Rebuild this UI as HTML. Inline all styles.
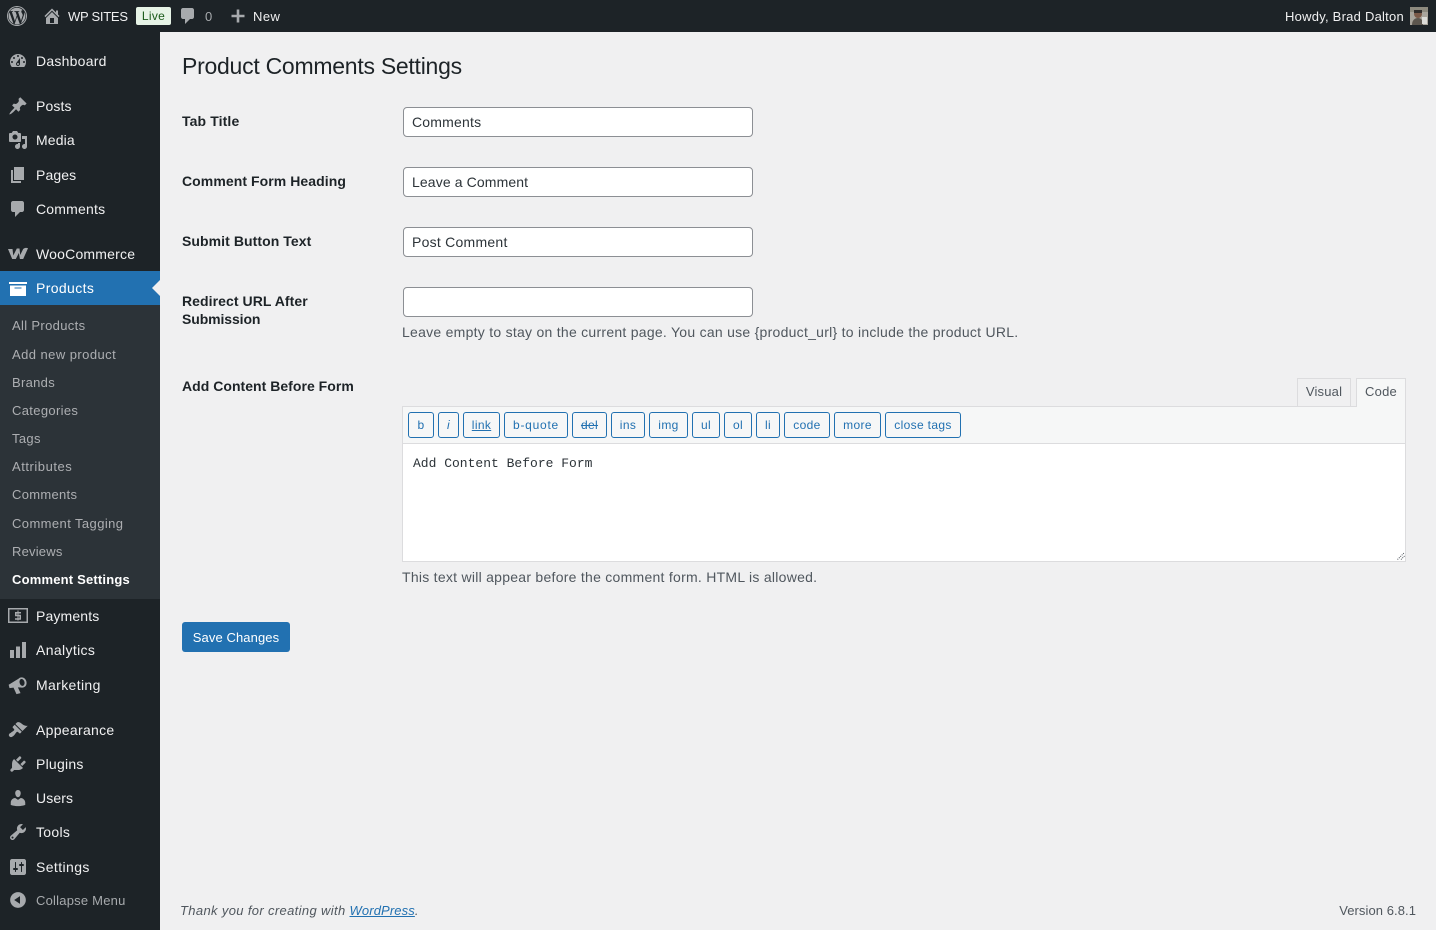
<!DOCTYPE html>
<html lang="en"><head><meta charset="utf-8"><title>Product Comments Settings</title>
<style>
html,body{margin:0;padding:0;width:1436px;height:930px;overflow:hidden;background:#f0f0f1}
body{position:relative;font-family:"Liberation Sans",Arial,sans-serif;font-size:14px;color:#1d2327}
.a,.t,.m,.s,.l,.q{position:absolute}
.t,.m,.s,.l{white-space:nowrap;line-height:20px;margin-top:-10px}
.m{left:36px;color:#f0f0f1;font-size:14px;letter-spacing:.24px}
.s{left:12px;color:#c3c4c7;font-size:13px;letter-spacing:.4px;opacity:.85}
.l{left:182px;font-weight:bold;letter-spacing:.07px;color:#1d2327}
svg.i{position:absolute;fill:#a7aaad}
.in{position:absolute;left:403px;width:350px;height:30px;box-sizing:border-box;border:1px solid #8c8f94;border-radius:4px;background:#fff;padding-left:8px;line-height:28px;color:#2c3338;letter-spacing:.2px}
.q{top:412px;height:26px;box-sizing:border-box;border:1px solid #2271b1;border-radius:3px;background:#f6f7f7;color:#2271b1;font-size:12px;line-height:24px;text-align:center;letter-spacing:.35px}
.d{color:#50575e;letter-spacing:.265px}
</style></head><body>
<div class="a" style="left:0;top:0;width:1436px;height:32px;background:#1d2327"></div>
<div class="a" style="left:0;top:32px;width:160px;height:898px;background:#1d2327"></div>
<div class="a" style="left:0;top:271px;width:160px;height:34px;background:#2271b1"></div>
<div class="a" style="left:0;top:305px;width:160px;height:294px;background:#2c3338"></div>
<div class="a" style="left:152px;top:280px;width:0;height:0;border:8px solid transparent;border-left:0;border-right-color:#f0f0f1"></div>

<!-- admin bar -->
<svg class="i" style="left:7px;top:6px" width="20" height="20" viewBox="0 0 20 20"><path fill-rule="evenodd" d="M10 0a10 10 0 1 1 0 20a10 10 0 0 1 0-20zm0 1a9 9 0 1 0 0 18a9 9 0 0 0 0-18zM2.400 6.300L6.500 17.600A8.400 8.400 0 0 1 2.400 6.300zM15.800 9.700c0-1-.4-1.700-.7-2.300-.4-.7-.8-1.200-.8-1.900 0-.7.5-1.400 1.300-1.400h.1A8.400 8.400 0 0 0 3.100 5.100h.5c.9 0 2.200-.1 2.200-.1.400 0 .5.6 0 .7 0 0-.5.1-1 .1l3.100 9.200 1.900-5.600-1.300-3.600c-.5 0-.9-.1-.9-.1-.5 0-.4-.7 0-.7 0 0 1.400.1 2.200.1.900 0 2.200-.1 2.200-.1.400 0 .5.6 0 .7 0 0-.5.1-1 .1l3 9.100.8-2.800c.4-1.100.7-1.900.7-2.600zM10.100 10.700l-2.500 7.400a8.400 8.400 0 0 0 5.200-.1zM17.300 5.900c.1.300.1.600.1.900 0 .900-.2 1.900-.7 3.100l-2.600 7.400a8.400 8.400 0 0 0 3.200-11.400z"/></svg>
<svg class="i" style="left:43px;top:6px" width="18" height="20" viewBox="1 1 18 18"><path d="M16 8.500l1.530 1.530-1.060 1.060L10 4.620l-6.470 6.470-1.060-1.060L10 2.500l4 4v-2h2v4zm-6-2.460l6 5.990V18H4v-5.970zM12 17v-5H8v5h4z"/></svg>
<div class="t" style="left:68px;top:17px;color:#f0f0f1;font-size:13px;letter-spacing:-.27px">WP SITES</div>
<div class="a" style="left:136px;top:7px;width:35px;height:18px;background:#e6f3e6;border-radius:2px;color:#1a5a1a;font-size:12px;line-height:19px;text-align:center;letter-spacing:.3px">Live</div>
<svg class="i" style="left:179px;top:6px" width="18" height="20" viewBox="1 1 18 18"><path d="M5 2h9c1.100 0 2 .9 2 2v7c0 1.100-.9 2-2 2h-2l-5 5v-5H5c-1.100 0-2-.9-2-2V4c0-1.100.9-2 2-2z"/></svg>
<div class="t" style="left:205px;top:17px;color:#a7aaad;font-size:13px">0</div>
<svg class="i" style="left:230px;top:8px" width="16" height="16" viewBox="0 0 16 16"><path d="M6.700 1.500h2.600v5.200h5.200v2.600H9.300v5.200H6.700V9.300H1.500V6.700h5.200z"/></svg>
<div class="t" style="left:253px;top:17px;color:#f0f0f1;font-size:13px;letter-spacing:.45px">New</div>
<div class="t" style="left:1285px;top:17px;color:#f0f0f1;font-size:13px;letter-spacing:.24px">Howdy, Brad Dalton</div>
<svg class="a" style="left:1410px;top:7px" width="18" height="18" viewBox="0 0 18 18"><rect width="18" height="18" fill="#a9a59c"/><rect x="0" y="0" width="18" height="5" fill="#8d8a7e"/><circle cx="8" cy="7" r="4" fill="#7c5a48"/><rect x="4" y="3" width="8" height="3" fill="#2f2c2a"/><path d="M2 18c0-5 3-7 6-7s5 2 5 7z" fill="#5c564e"/><rect x="12" y="10" width="5" height="7" fill="#dcdcd8"/></svg>

<!-- menu icons -->
<svg class="i" style="left:8px;top:51px" width="20" height="20" viewBox="0 0 20 20"><path d="M3.760 16h12.480c1.100-1.370 1.760-3.110 1.760-5 0-4.420-3.580-8-8-8s-8 3.580-8 8c0 1.890.66 3.630 1.760 5zM10 4c.55 0 1 .45 1 1s-.45 1-1 1-1-.45-1-1 .45-1 1-1zM6 6c.55 0 1 .45 1 1s-.45 1-1 1-1-.45-1-1 .45-1 1-1zm8 0c.55 0 1 .45 1 1s-.45 1-1 1-1-.45-1-1 .45-1 1-1zm-5.370 5.550L12 7v6c0 1.100-.9 2-2 2s-2-.9-2-2c0-.57.24-1.080.63-1.450zM4 10c.55 0 1 .45 1 1s-.45 1-1 1-1-.45-1-1 .45-1 1-1zm12 0c.55 0 1 .45 1 1s-.45 1-1 1-1-.45-1-1 .45-1 1-1zm-5 3c0-.55-.45-1-1-1s-1 .45-1 1 .45 1 1 1 1-.45 1-1z"/></svg>
<svg class="i" style="left:8px;top:96px" width="20" height="20" viewBox="0 0 20 20"><path d="M10.440 3.020l1.820-1.820 6.360 6.350-1.830 1.820c-1.050-.68-2.480-.57-3.410.36l-.75.75c-.92.93-1.040 2.350-.35 3.410l-1.830 1.820-2.410-2.410-2.800 2.790c-.42.42-3.380 2.710-3.800 2.290s1.860-3.390 2.280-3.810l2.790-2.790L4.100 9.360l1.830-1.820c1.050.69 2.480.57 3.400-.36l.75-.75c.93-.92 1.050-2.350.36-3.410z"/></svg>
<svg class="i" style="left:8px;top:130px" width="20" height="20" viewBox="0 0 20 20"><path d="M13 11V4c0-.55-.45-1-1-1h-1.670L9 1H5L3.670 3H2c-.55 0-1 .45-1 1v7c0 .55.45 1 1 1h10c.55 0 1-.45 1-1zM7 4.500c1.380 0 2.500 1.120 2.500 2.500S8.380 9.500 7 9.500 4.500 8.380 4.500 7 5.620 4.500 7 4.500zM14 6h5v10.500c0 1.380-1.120 2.500-2.500 2.500S14 17.880 14 16.500s1.120-2.500 2.500-2.500c.17 0 .34.020.5.050V9h-3V6zm-4 8.050V13h2v3.500c0 1.380-1.120 2.500-2.500 2.500S7 17.880 7 16.500 8.120 14 9.500 14c.17 0 .34.020.5.050z"/></svg>
<svg class="i" style="left:8px;top:165px" width="20" height="20" viewBox="0 0 20 20"><path d="M6 15V2h10v13H6zm-1 1h8v2H3V5h2v11z"/></svg>
<svg class="i" style="left:8px;top:199px" width="20" height="20" viewBox="0 0 20 20"><path d="M5 2h9c1.100 0 2 .9 2 2v7c0 1.100-.9 2-2 2h-2l-5 5v-5H5c-1.100 0-2-.9-2-2V4c0-1.100.9-2 2-2z"/></svg>
<svg class="i" style="left:8px;top:247px" width="20" height="13" viewBox="0 0 20 13"><path d="M0 2h4.500l.8 6.500L8.800 1.500h2.700l.7 6.500L15.200 2c1.400-1.300 3.800-1.300 4.800-.8L15.200 12h-3.300l-1-6L7.800 12H4.200z"/></svg>
<svg class="a" style="left:8px;top:278px" width="20" height="20" viewBox="0 0 20 20"><path fill="#fff" d="M1 4h18v2H1zM2 7.500h16V18H2zM6.500 9.500v1h7v-1z" fill-rule="evenodd"/></svg>
<svg class="i" style="left:8px;top:607px" width="20" height="18" viewBox="0 0 20 18"><path fill-rule="evenodd" d="M0 1h20v15H0zM1.500 2.500v12h17v-12z"/><path d="M7 5h6v1.500H8.500v1.300H13v5H7v-1.500h4.500v-2H7zM9.500 3.500h1v10h-1z"/></svg>
<svg class="i" style="left:8px;top:640px" width="20" height="20" viewBox="0 0 20 20"><path d="M2 10h4v8H2zM8 6.500h4V18H8zM14 2h4v16h-4z"/></svg>
<svg class="i" style="left:8px;top:675px" width="20" height="20" viewBox="0 0 20 20"><g transform="rotate(-14 10 10)"><path fill-rule="evenodd" d="M1 7.500L12 4c1-.5 1.500-.6 2.500-.6 3 0 4.500 2.600 4.500 5.100 0 2.800-1.700 5.200-4.500 5.200-1 0-1.500-.2-2.500-.6l-2.700-.8 1.200 6.200H6.300L5 11.500l-4-.5zM14.500 5c-1.400 0-2.400 1.700-2.400 3.500s1 3.500 2.400 3.500 2.500-1.700 2.500-3.500S15.900 5 14.500 5z"/></g></svg>
<svg class="i" style="left:8px;top:720px" width="20" height="20" viewBox="0 0 20 20"><path d="M14.480 11.060L7.410 3.990l1.500-1.500c.5-.56 2.300-.47 3.510.32 1.210.8 1.430 1.280 2.910 2.100 1.180.64 2.450 1.260 4.450.85zm-.71.71L6.700 4.700 4.930 6.470c-.39.39-.39 1.020 0 1.410l1.060 1.060c.39.39.39 1.030 0 1.420-.6.6-1.430 1.110-2.210 1.690-.35.26-.7.530-1.010.84C1.430 13.230 0 15 1.500 16.500s3.270.07 4.610-1.270c.31-.31.580-.66.840-1.010.58-.78 1.090-1.610 1.690-2.210.39-.39 1.020-.39 1.410 0l1.060 1.060c.39.39 1.020.39 1.410 0z"/></svg>
<svg class="i" style="left:8px;top:754px" width="20" height="20" viewBox="0 0 20 20"><path d="M13.110 4.360L9.870 7.600 8 5.730l3.240-3.240c.35-.34 1.050-.2 1.560.32.52.51.66 1.210.31 1.550zm-8 1.770l.91-1.120 9.010 9.010-1.190.84c-.71.71-2.630 1.160-3.820 1.160H6.140L4.900 17.260c-.59.59-1.540.59-2.120 0-.59-.58-.59-1.530 0-2.120l1.240-1.240v-3.880c0-1.130.4-3.190 1.090-3.890zm7.260 3.970l3.240-3.240c.34-.35 1.040-.21 1.550.31.52.51.66 1.210.31 1.550l-3.240 3.250z"/></svg>
<svg class="i" style="left:8px;top:788px" width="20" height="20" viewBox="0 0 20 20"><path d="M10 9.250c-2.270 0-2.730-3.440-2.730-3.440C7 4.020 7.820 2 9.970 2c2.160 0 2.980 2.020 2.710 3.810 0 0-.41 3.440-2.680 3.440zm0 2.570L12.720 10c2.390 0 4.520 2.330 4.520 4.530v2.490s-3.650 1.130-7.240 1.130c-3.650 0-7.240-1.130-7.240-1.130v-2.490c0-2.250 1.940-4.480 4.470-4.480z"/></svg>
<svg class="i" style="left:8px;top:822px" width="20" height="20" viewBox="0 0 20 20"><path d="M16.680 9.770c-1.340 1.340-3.300 1.670-4.950.99l-5.410 6.520c-.99.99-2.590.99-3.580 0s-.99-2.590 0-3.570l6.520-5.420c-.68-1.650-.35-3.610.99-4.950 1.280-1.280 3.120-1.620 4.720-1.060l-2.890 2.890 2.820 2.820 2.860-2.870c.53 1.580.18 3.390-1.080 4.650zM3.810 16.210c.4.39 1.040.39 1.430 0 .4-.4.4-1.040 0-1.430-.39-.4-1.030-.4-1.430 0-.39.39-.39 1.030 0 1.430z"/></svg>
<svg class="i" style="left:8px;top:857px" width="20" height="20" viewBox="0 0 20 20"><path d="M18 16V4c0-1.100-.9-2-2-2H4c-1.100 0-2 .9-2 2v12c0 1.100.9 2 2 2h12c1.100 0 2-.9 2-2zM8 11h1c.55 0 1 .45 1 1s-.45 1-1 1H8v1.500c0 .28-.22.5-.5.5s-.5-.22-.5-.5V13H6c-.55 0-1-.45-1-1s.45-1 1-1h1V5.500c0-.28.22-.5.5-.5s.5.22.5.5V11zm5-2h-1c-.55 0-1-.45-1-1s.45-1 1-1h1V5.500c0-.28.22-.5.5-.5s.5.22.5.5V7h1c.55 0 1 .45 1 1s-.45 1-1 1h-1v5.500c0 .28-.22.5-.5.5s-.5-.22-.5-.5V9z"/></svg>
<svg class="i" style="left:8px;top:890px" width="20" height="20" viewBox="0 0 20 20"><path d="M10 2.160c4.330 0 7.840 3.510 7.840 7.840s-3.510 7.840-7.840 7.840S2.160 14.330 2.160 10 5.710 2.160 10 2.160zm2 11.720V6.120L6.180 9.970z"/></svg>

<!-- menu -->
<div class="m" style="top:61px">Dashboard</div>
<div class="m" style="top:106px;letter-spacing:.12px">Posts</div>
<div class="m" style="top:140px;letter-spacing:.12px">Media</div>
<div class="m" style="top:175px;letter-spacing:.12px">Pages</div>
<div class="m" style="top:209px;letter-spacing:.2px">Comments</div>
<div class="m" style="top:254px;letter-spacing:.2px">WooCommerce</div>
<div class="m" style="top:288px;color:#fff;letter-spacing:.37px">Products</div>
<div class="s" style="top:326px;letter-spacing:.34px">All Products</div>
<div class="s" style="top:355px;letter-spacing:.44px">Add new product</div>
<div class="s" style="top:383px;letter-spacing:.3px">Brands</div>
<div class="s" style="top:411px;letter-spacing:.34px">Categories</div>
<div class="s" style="top:439px;letter-spacing:.34px">Tags</div>
<div class="s" style="top:467px;letter-spacing:.54px">Attributes</div>
<div class="s" style="top:495px;letter-spacing:.3px">Comments</div>
<div class="s" style="top:524px;letter-spacing:.41px">Comment Tagging</div>
<div class="s" style="top:552px;letter-spacing:.2px">Reviews</div>
<div class="s" style="top:580px;color:#fff;font-weight:bold;opacity:1;letter-spacing:.19px">Comment Settings</div>
<div class="m" style="top:616px;letter-spacing:.14px">Payments</div>
<div class="m" style="top:650px;letter-spacing:.36px">Analytics</div>
<div class="m" style="top:685px;letter-spacing:.36px">Marketing</div>
<div class="m" style="top:730px;letter-spacing:.3px">Appearance</div>
<div class="m" style="top:764px">Plugins</div>
<div class="m" style="top:798px;letter-spacing:.12px">Users</div>
<div class="m" style="top:832px;letter-spacing:.3px">Tools</div>
<div class="m" style="top:867px;letter-spacing:.4px">Settings</div>
<div class="m" style="top:901px;color:#a7aaad;font-size:13px;letter-spacing:.22px">Collapse Menu</div>

<!-- content -->
<h1 class="a" style="left:182px;top:52px;margin:0;font-size:23px;font-weight:400;line-height:28px;letter-spacing:-.26px;white-space:nowrap">Product Comments Settings</h1>
<div class="l" style="top:121px;letter-spacing:.12px">Tab Title</div>
<div class="in" style="top:107px">Comments</div>
<div class="l" style="top:181px">Comment Form Heading</div>
<div class="in" style="top:167px;letter-spacing:.12px">Leave a Comment</div>
<div class="l" style="top:241px">Submit Button Text</div>
<div class="in" style="top:227px;letter-spacing:.25px">Post Comment</div>
<div class="l" style="top:301px;line-height:18px;margin-top:-9px">Redirect URL After<br><span style="letter-spacing:-.1px">Submission</span></div>
<div class="in" style="top:287px"></div>
<div class="t d" style="left:402px;top:332px">Leave empty to stay on the current page. You can use {product_url} to include the product URL.</div>
<div class="l" style="top:386px;letter-spacing:.03px">Add Content Before Form</div>

<div class="a" style="left:1297px;top:378px;width:54px;height:29px;box-sizing:border-box;border:1px solid #dcdcde;background:#f0f0f1;color:#50575e;font-size:13px;line-height:26px;text-align:center;letter-spacing:.2px">Visual</div>
<div class="a" style="left:402px;top:406px;width:1004px;height:156px;box-sizing:border-box;border:1px solid #dcdcde;background:#fff"></div>
<div class="a" style="left:403px;top:407px;width:1002px;height:36px;background:#f6f7f7;border-bottom:1px solid #dcdcde"></div>
<div class="a" style="left:1356px;top:378px;width:50px;height:29px;box-sizing:border-box;border:1px solid #dcdcde;border-bottom:0;background:#f6f7f7;color:#50575e;font-size:13px;line-height:26px;text-align:center;letter-spacing:.2px">Code</div>

<div class="q" style="left:408px;width:26px">b</div>
<div class="q" style="left:438px;width:21px;font-style:italic">i</div>
<div class="q" style="left:463px;width:37px;text-decoration:underline">link</div>
<div class="q" style="left:504px;width:64px;letter-spacing:.75px">b-quote</div>
<div class="q" style="left:572px;width:35px;text-decoration:line-through">del</div>
<div class="q" style="left:611px;width:34px">ins</div>
<div class="q" style="left:649px;width:39px">img</div>
<div class="q" style="left:692px;width:28px">ul</div>
<div class="q" style="left:724px;width:28px">ol</div>
<div class="q" style="left:756px;width:24px">li</div>
<div class="q" style="left:784px;width:46px">code</div>
<div class="q" style="left:834px;width:47px">more</div>
<div class="q" style="left:885px;width:76px">close tags</div>

<div class="t" style="left:413px;top:464px;font-family:'Liberation Mono',monospace;font-size:13px;color:#2c3338">Add Content Before Form</div>
<svg class="a" style="left:1396px;top:551px" width="10" height="10" viewBox="0 0 10 10"><path d="M1.500 8.500L8.500 1.500M5 8.500L8.500 5" stroke="#50575e" stroke-width="1" stroke-dasharray="1 1" fill="none"/></svg>
<div class="t d" style="left:402px;top:577px">This text will appear before the comment form. HTML is allowed.</div>

<div class="a" style="left:182px;top:622px;width:108px;height:30px;background:#2271b1;border-radius:3px;color:#fff;font-size:13px;line-height:31px;text-align:center;letter-spacing:.1px">Save Changes</div>

<div class="t" style="left:180px;top:911px;font-size:13px;font-style:italic;color:#50575e;letter-spacing:.35px">Thank you for creating with <span style="color:#2271b1;text-decoration:underline;letter-spacing:.12px">WordPress</span>.</div>
<div class="t" style="right:20px;top:911px;font-size:13px;color:#50575e;letter-spacing:.07px">Version 6.8.1</div>
</body></html>
